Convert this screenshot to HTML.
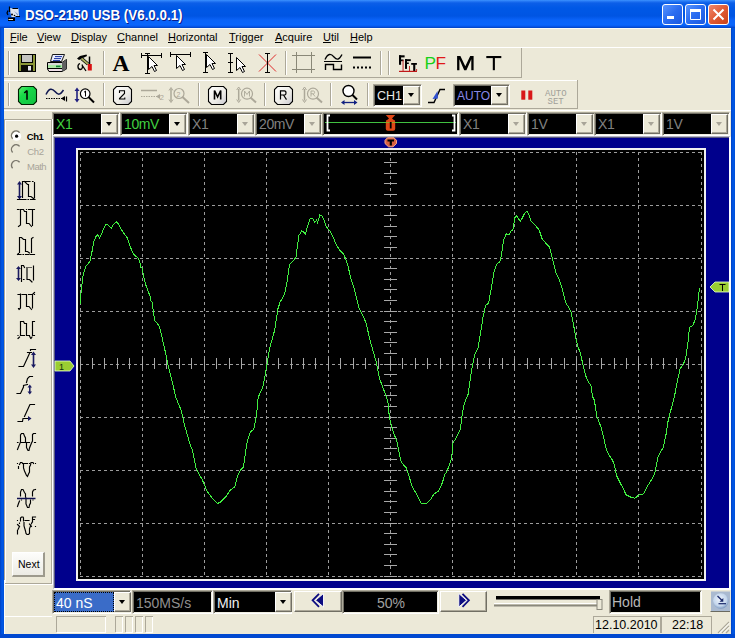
<!DOCTYPE html>
<html><head><meta charset="utf-8">
<style>
*{margin:0;padding:0;box-sizing:border-box}
html,body{width:735px;height:638px;overflow:hidden;background:#ECE9D8;font-family:"Liberation Sans",sans-serif;font-size:11px;color:#000}
.a{position:absolute}
.t{white-space:nowrap}
#title{left:0;top:0;width:735px;height:28px;background:linear-gradient(#3d95ff 0px,#2a7cf6 1px,#0c5fe8 3px,#0058e6 8px,#0055e3 16px,#0a63f8 20px,#0a66fc 25px,#0650e0 27px,#0040b8 28px)}
#ttext{left:25px;top:7px;color:#fff;font-weight:bold;font-size:14px;transform:scaleX(0.955);transform-origin:0 0;text-shadow:1px 1px 0 #0a1e8c;white-space:nowrap}
.frame{background:linear-gradient(90deg,#0040c0,#0058e8,#0050d8)}
.menu{top:31px;white-space:nowrap}
.u{text-decoration:underline}
</style></head><body>
<div class="a" id="title"></div>
<div class="a" style="left:4px;top:28px;width:727px;height:1px;background:#fbfbf6"></div>
<div class="a" id="ttext">DSO-2150 USB (V6.0.0.1)</div>
<div class="a frame" style="left:0;top:28px;width:4px;height:610px"></div>
<div class="a frame" style="left:731px;top:28px;width:4px;height:610px"></div>
<div class="a" style="left:0;top:634px;width:735px;height:4px;background:#0048d0"></div>

<div class="a menu" style="left:10px"><span class="u">F</span>ile</div>
<div class="a menu" style="left:37px"><span class="u">V</span>iew</div>
<div class="a menu" style="left:71px"><span class="u">D</span>isplay</div>
<div class="a menu" style="left:117px"><span class="u">C</span>hannel</div>
<div class="a menu" style="left:168px"><span class="u">H</span>orizontal</div>
<div class="a menu" style="left:229px"><span class="u">T</span>rigger</div>
<div class="a menu" style="left:275px"><span class="u">A</span>cquire</div>
<div class="a menu" style="left:323px"><span class="u">U</span>til</div>
<div class="a menu" style="left:350px"><span class="u">H</span>elp</div>

<div class="a" style="left:4px;top:47px;width:727px;height:1px;background:#fff"></div>
<div class="a" style="left:4px;top:77px;width:518px;height:1px;background:#aca899"></div>
<div class="a" style="left:521px;top:48px;width:1px;height:30px;background:#aca899"></div>
<div class="a" style="left:4px;top:80px;width:573px;height:1px;background:#fff"></div>
<div class="a" style="left:4px;top:108px;width:574px;height:1px;background:#aca899"></div>
<div class="a" style="left:577px;top:80px;width:1px;height:29px;background:#aca899"></div>
<div class="a" style="left:4px;top:110px;width:727px;height:1px;background:#fff"></div>
<div class="a" style="left:8px;top:51px;width:1px;height:24px;background:#aca899"></div><div class="a" style="left:9px;top:51px;width:1px;height:24px;background:#fff"></div>
<div class="a" style="left:103px;top:51px;width:1px;height:24px;background:#aca899"></div><div class="a" style="left:104px;top:51px;width:1px;height:24px;background:#fff"></div>
<div class="a" style="left:285px;top:51px;width:1px;height:24px;background:#aca899"></div><div class="a" style="left:286px;top:51px;width:1px;height:24px;background:#fff"></div>
<div class="a" style="left:380px;top:51px;width:1px;height:24px;background:#aca899"></div><div class="a" style="left:381px;top:51px;width:1px;height:24px;background:#fff"></div>
<div class="a" style="left:388px;top:51px;width:1px;height:24px;background:#aca899"></div><div class="a" style="left:389px;top:51px;width:1px;height:24px;background:#fff"></div>
<div class="a" style="left:8px;top:83px;width:1px;height:23px;background:#aca899"></div><div class="a" style="left:9px;top:83px;width:1px;height:23px;background:#fff"></div>
<div class="a" style="left:103px;top:83px;width:1px;height:23px;background:#aca899"></div><div class="a" style="left:104px;top:83px;width:1px;height:23px;background:#fff"></div>
<div class="a" style="left:198px;top:83px;width:1px;height:23px;background:#aca899"></div><div class="a" style="left:199px;top:83px;width:1px;height:23px;background:#fff"></div>
<div class="a" style="left:264px;top:83px;width:1px;height:23px;background:#aca899"></div><div class="a" style="left:265px;top:83px;width:1px;height:23px;background:#fff"></div>
<div class="a" style="left:330px;top:83px;width:1px;height:23px;background:#aca899"></div><div class="a" style="left:331px;top:83px;width:1px;height:23px;background:#fff"></div>
<div class="a" style="left:367px;top:83px;width:1px;height:23px;background:#aca899"></div><div class="a" style="left:368px;top:83px;width:1px;height:23px;background:#fff"></div>

<svg class="a" style="left:0;top:0" width="735" height="112" viewBox="0 0 735 112">
<!-- floppy -->
<rect x="18.5" y="54.5" width="17" height="17" fill="#8c9838" stroke="#000"/>
<rect x="21.5" y="54.5" width="11" height="8" fill="#c4c4c0" stroke="#000"/>
<rect x="21" y="65" width="12" height="6.5" fill="#0c0c08"/>
<rect x="28" y="66" width="3" height="4.5" fill="#e8e8f0"/>
<!-- printer -->
<path d="M50.5,61.5 L52.5,54.5 L64.5,54.5 L61.5,61.5 Z" fill="#e8ecff" stroke="#000" stroke-width="0.9"/>
<path d="M55,56.6 L62,56.6 M54,58.6 L61,58.6 M53,60.6 L60,60.6" stroke="#1830a0" stroke-width="1"/>
<path d="M47.5,62.5 L62,62.5 L66.5,59.5 L66.5,69 L62,71.5 L49,71.5 L47.5,69 Z" fill="#d8d8d8" stroke="#000" stroke-width="1"/>
<path d="M62,62.5 L66.5,59.5 L66.5,69 L62,71.5 Z" fill="#606060"/>
<rect x="48" y="65" width="14" height="2.8" fill="#a8e8a0"/>
<rect x="56" y="65.6" width="4.5" height="1.6" fill="#108030"/>
<path d="M47.5,68.5 L62,68.5" stroke="#000" stroke-width="1"/>
<rect x="49" y="69.2" width="12" height="1.8" fill="#f0e0e8"/>
<!-- tool -->
<path d="M77,58.5 L80,56 L86.5,54.5 L87,56 L82,58.5 L79,60 Z" fill="#000"/>
<path d="M81.5,58.5 L88,64" stroke="#000" stroke-width="3.2"/>
<path d="M81.5,58.5 L88,64" stroke="#a8b060" stroke-width="1.8"/>
<path d="M89.5,56.5 L89.5,64" stroke="#000" stroke-width="1.5"/>
<rect x="87.8" y="64" width="4" height="6.5" fill="#d81010"/>
<path d="M80,63.5 C77,64.5 77.5,69.5 80.5,69.5 C82.5,69.5 83,66 82,64.5 M82,65 L86,71" fill="none" stroke="#000" stroke-width="1.3"/>
<!-- A -->
<text x="112.5" y="71" font-family="Liberation Serif" font-weight="bold" font-size="23.5" fill="#000">A</text>
<!-- cursor icons -->
<g stroke="#000" stroke-width="1" fill="none" shape-rendering="crispEdges">
<path d="M141,55.5 L162,55.5 M141.5,53 L141.5,58 M161.5,53 L161.5,58"/>
<path d="M147.5,53 L147.5,74 M145,73.5 L150,73.5 M145,53.5 L150,53.5"/>
<path d="M170,54.5 L191,54.5 M170.5,52 L170.5,57 M190.5,52 L190.5,57"/>
<path d="M205.5,52 L205.5,73 M203,52.5 L208,52.5 M203,72.5 L208,72.5"/>
<path d="M230.5,53 L230.5,73 M228,53.5 L233,53.5 M228,72.5 L233,72.5 M228,62.5 L233,62.5"/>
</g>
<g fill="#fff" stroke="#000" stroke-width="1">
<path d="M148.5,56.5 L157.5,65.5 L154,65.5 L156.5,70.5 L154.5,71.5 L152,66.5 L148.5,69.5 Z"/>
<path d="M176.5,55.5 L185.5,64.5 L182,64.5 L184.5,69.5 L182.5,70.5 L180,65.5 L176.5,68.5 Z"/>
<path d="M206.5,54.5 L215.5,63.5 L212,63.5 L214.5,68.5 L212.5,69.5 L210,64.5 L206.5,67.5 Z"/>
<path d="M236.5,57.5 L245.5,66.5 L242,66.5 L244.5,71.5 L242.5,72.5 L240,67.5 L236.5,70.5 Z"/>
</g>
<!-- red X -->
<path d="M259,54.5 L276,71.5 M276,54.5 L259,71.5" stroke="#e02828" stroke-width="1"/>
<path d="M267.5,53 L267.5,73 M265,53.5 L270,53.5 M265,72.5 L270,72.5" stroke="#000" stroke-width="1" shape-rendering="crispEdges"/>
<!-- grid icon -->
<path d="M292,55.5 L315,55.5 M292,69.5 L315,69.5 M296.5,52 L296.5,73 M311.5,52 L311.5,73" stroke="#8a8878" stroke-width="1" shape-rendering="crispEdges"/>
<!-- wave icon -->
<path d="M325,59.5 C328,53 331,53.5 334,57 C337,60.5 339,60 342,54.5" fill="none" stroke="#000" stroke-width="1.3"/>
<path d="M324,61.5 L342,61.5" stroke="#000" stroke-width="1" shape-rendering="crispEdges"/>
<path d="M325.5,70 L325.5,64.5 L333.5,64.5 L333.5,69.5 L341.5,69.5 L341.5,64.5" fill="none" stroke="#000" stroke-width="1.4"/>
<!-- lines icon -->
<path d="M353,57.5 L371,57.5" stroke="#000" stroke-width="2"/>
<path d="M353,67.5 L371,67.5" stroke="#000" stroke-width="2" stroke-dasharray="2 2"/>
<!-- FFT -->
<g fill="#000">
<rect x="399" y="55.3" width="2.1" height="9.5"/><rect x="399" y="55.3" width="5.6" height="2.1"/><rect x="399" y="59.5" width="4.5" height="1.7"/>
<rect x="405" y="59.2" width="2" height="9.7"/><rect x="405" y="59.2" width="5.8" height="1.9"/><rect x="405" y="62.5" width="3.8" height="1.5"/>
<rect x="411.2" y="63" width="5.7" height="1.8"/><rect x="413.2" y="63" width="2.1" height="8"/>
</g>
<g fill="#c01818">
<rect x="399" y="70.8" width="18" height="1.2"/><rect x="402.6" y="60" width="0.9" height="11"/><rect x="409" y="66" width="0.9" height="5"/><rect x="416.2" y="69" width="0.9" height="2"/>
</g>
<text x="424.5" y="69" font-family="Liberation Sans" font-size="17.3" fill="#18d018">P</text>
<text x="435.5" y="69" font-family="Liberation Sans" font-size="17.3" fill="#e01818">F</text>
<path d="M457.1,70.2 L457.1,56 L460.4,56 L465.3,66.3 L470.2,56 L473.6,56 L473.6,70.2 L471.3,70.2 L471.3,59.3 L466.4,70.2 L464.2,70.2 L459.4,59.3 L459.4,70.2 Z" fill="#000"/>
<rect x="486.3" y="56" width="15" height="2.1" fill="#000"/>
<rect x="492.8" y="56" width="2.1" height="14.2" fill="#000"/>
</svg>


<svg class="a" style="left:0;top:0" width="735" height="112" viewBox="0 0 735 112">
<defs>
<linearGradient id="gg" x1="0" y1="0" x2="1" y2="1"><stop offset="0" stop-color="#60f070"/><stop offset="0.35" stop-color="#18d848"/><stop offset="1" stop-color="#10c040"/></linearGradient>
<linearGradient id="wg" x1="0" y1="0" x2="1" y2="1"><stop offset="0" stop-color="#ffffff"/><stop offset="0.6" stop-color="#ecebe6"/><stop offset="1" stop-color="#c8c8d0"/></linearGradient>
</defs>
<path d="M21.5,86.5 L33.5,86.5 L36.5,89.5 L36.5,101.5 L33.5,104.5 L21.5,104.5 L18.5,101.5 L18.5,89.5 Z" fill="url(#gg)" stroke="#002000" stroke-width="1.1"/>
<path d="M27,90.5 L27,99.8 M24.3,93 L27,90.5" stroke="#000" stroke-width="1.6" fill="none"/>
<!-- wave1 -->
<path d="M46,94.5 C49,88 52,88 55,91.5 C58,95 60,95.5 63.5,90" fill="none" stroke="#101850" stroke-width="1.5"/>
<path d="M46,98.5 L62,98.5" stroke="#000" stroke-width="1" stroke-dasharray="1.5 1"/>
<path d="M61,98.5 L65,96 L65,101 Z" fill="#000"/>
<path d="M66.5,96.5 L66.5,101.5" stroke="#000" stroke-width="1.2"/>
<!-- zoom1 -->
<path d="M77,89 L77,101" stroke="#202080" stroke-width="1.6"/>
<path d="M74.5,91 L77,87.5 L79.5,91 Z M74.5,99 L77,102.5 L79.5,99 Z" fill="#202080"/>
<circle cx="85.2" cy="93.7" r="4.8" fill="#fff" stroke="#000" stroke-width="1.2"/>
<path d="M88.5,97 L94,102.5" stroke="#000" stroke-width="2"/>
<path d="M85.5,91 L85.5,96.5 M84,92.3 L85.5,91" stroke="#000" stroke-width="1" fill="none"/>
<!-- button 2 -->
<path d="M116.5,86.5 L128.5,86.5 L131.5,89.5 L131.5,101.5 L128.5,104.5 L116.5,104.5 L113.5,101.5 L113.5,89.5 Z" fill="url(#wg)" stroke="#000" stroke-width="1.1"/>
<path d="M119.5,93 L119.5,90.7 L124.5,90.7 L124.5,93.5 L119.5,98.5 L119.5,99 L124.8,99 L124.8,97.5" fill="none" stroke="#000" stroke-width="1.1"/>
<!-- wave2 disabled -->
<path d="M141,90.5 L157,90.5" stroke="#aca899" stroke-width="1.5"/>
<path d="M141,96.5 L157,96.5" stroke="#aca899" stroke-width="1" stroke-dasharray="1.5 1"/>
<path d="M156,96.5 L160,94 L160,99 Z" fill="#aca899"/>
<text x="159.5" y="99.5" font-family="Liberation Sans" font-size="8" fill="#aca899">2</text>
<!-- zoom2 disabled -->
<g stroke="#aca899" fill="none">
<path d="M171,89 L171,101" stroke-width="1.5"/><path d="M169,90.5 L171,87.5 L173,90.5 M169,99.5 L171,102.5 L173,99.5" stroke-width="1"/>
<circle cx="179" cy="93.5" r="5" stroke-width="1.2"/>
<path d="M182.5,97 L189,103" stroke-width="2"/>
</g>
<text x="176.5" y="96.5" font-family="Liberation Sans" font-size="7" fill="#aca899">2</text>
<!-- M -->
<path d="M211.5,86.5 L223.5,86.5 L226.5,89.5 L226.5,101.5 L223.5,104.5 L211.5,104.5 L208.5,101.5 L208.5,89.5 Z" fill="url(#wg)" stroke="#000" stroke-width="1.1"/>
<path d="M214.5,99.6 L214.5,90.5 L217.6,97 L220.7,90.5 L220.7,99.6" fill="none" stroke="#000" stroke-width="1.6"/>
<g stroke="#aca899" fill="none">
<path d="M238.7,89 L238.7,100.5" stroke-width="1.5"/><path d="M236.7,90 L238.7,87 L240.7,90 M236.7,99.5 L238.7,102.5 L240.7,99.5" stroke-width="1"/>
<circle cx="247" cy="93.7" r="5.5" stroke-width="1.2"/>
<path d="M250.5,97.5 L256,102.5" stroke-width="2"/>
<path d="M244.5,96.5 L244.5,91 L247,94.5 L249.5,91 L249.5,96.5" stroke-width="0.9"/>
</g>
<!-- R -->
<path d="M277.5,86.5 L289.5,86.5 L292.5,89.5 L292.5,101.5 L289.5,104.5 L277.5,104.5 L274.5,101.5 L274.5,89.5 Z" fill="url(#wg)" stroke="#000" stroke-width="1.1"/>
<path d="M280.5,99.6 L280.5,90.8 L284.5,90.8 C286.5,90.8 286.5,95 284.5,95 L280.5,95 M283.5,95 L286.5,99.6" fill="none" stroke="#000" stroke-width="1.2"/>
<g stroke="#aca899" fill="none">
<path d="M304.5,89 L304.5,100.5" stroke-width="1.5"/><path d="M302.5,90 L304.5,87 L306.5,90 M302.5,99.5 L304.5,102.5 L306.5,99.5" stroke-width="1"/>
<circle cx="313" cy="93.7" r="5.5" stroke-width="1.2"/>
<path d="M316.5,97.5 L322,102.5" stroke-width="2"/>
<path d="M311,96.5 L311,91 L313.5,91 C315,91 315,93.8 313.5,93.8 L311,93.8 M313,93.8 L315,96.5" stroke-width="0.9"/>
</g>
<!-- zoom arrow -->
<circle cx="348.5" cy="91" r="5.5" fill="#fff" stroke="#000" stroke-width="1.4"/>
<path d="M352.5,95 L357,99.5" stroke="#000" stroke-width="2"/>
<path d="M344,102.5 L355,102.5" stroke="#102080" stroke-width="1.3"/>
<path d="M341,102.5 L344.5,100 L344.5,105 Z M357.5,102.5 L354,100 L354,105 Z" fill="#102080"/>
<!-- trigger edge -->
<path d="M428,102.5 L434,102.5 L440,89.5 L445,89.5" fill="none" stroke="#000" stroke-width="1.4"/>
<path d="M432.5,99 L437.5,91 L438,98.5 Z" fill="#3050d0"/>
<!-- pause -->
<rect x="521.3" y="90.5" width="4" height="9.2" fill="#d81818"/>
<rect x="528.3" y="90.5" width="4" height="9.2" fill="#d81818"/>
<text x="545" y="95.5" font-family="Liberation Mono" font-size="9" fill="#a0a098">AUTO</text>
<text x="547.5" y="103.5" font-family="Liberation Mono" font-size="9" fill="#a0a098">SET</text>
</svg>

<div class="a" style="left:373px;top:84px;width:49px;height:23px;background:#ece9d8;border-top:1px solid #aca899;border-left:1px solid #aca899;border-bottom:1px solid #fff;border-right:1px solid #fff;box-shadow:inset 1px 1px 0 #716f64, inset -1px -1px 0 #f1efe2"></div><div class="a" style="left:375px;top:86px;width:28px;height:19px;background:#000"></div><div class="a" style="left:403px;top:86px;width:17px;height:19px;background:#ece9d8;border-top:1px solid #fff;border-left:1px solid #fff;border-right:1px solid #716f64;border-bottom:1px solid #716f64;box-shadow:inset -1px -1px 0 #aca899"></div><div class="a" style="left:408px;top:93px;width:0;height:0;border-left:3.5px solid transparent;border-right:3.5px solid transparent;border-top:4px solid #000"></div><div class="a t" style="left:377px;top:87px;height:19px;line-height:19px;font-size:12.5px;letter-spacing:0px;color:#e8e8e8">CH1</div><div class="a" style="left:453px;top:84px;width:57px;height:23px;background:#ece9d8;border-top:1px solid #aca899;border-left:1px solid #aca899;border-bottom:1px solid #fff;border-right:1px solid #fff;box-shadow:inset 1px 1px 0 #716f64, inset -1px -1px 0 #f1efe2"></div><div class="a" style="left:455px;top:86px;width:36px;height:19px;background:#000"></div><div class="a" style="left:491px;top:86px;width:17px;height:19px;background:#ece9d8;border-top:1px solid #fff;border-left:1px solid #fff;border-right:1px solid #716f64;border-bottom:1px solid #716f64;box-shadow:inset -1px -1px 0 #aca899"></div><div class="a" style="left:496px;top:93px;width:0;height:0;border-left:3.5px solid transparent;border-right:3.5px solid transparent;border-top:4px solid #000"></div><div class="a t" style="left:457px;top:87px;height:19px;line-height:19px;font-size:12px;letter-spacing:0px;color:#8888e8">AUTO</div>

<div class="a" style="left:53px;top:136px;width:678px;height:454px;background:#00008c;border-top:1px solid #b4b4c4;border-left:1px solid #b4b4c4;border-bottom:2px solid #fff;border-right:2px solid #fff;box-shadow:inset 1px 1px 0 #585880"></div>
<div class="a" style="left:76px;top:148px;width:630px;height:433px;background:#f0f0f0"></div>
<div class="a" style="left:78px;top:150px;width:626px;height:429px;background:#000"></div>
<svg class="a" style="left:0;top:0" width="735" height="638" viewBox="0 0 735 638">
<g stroke="#9c9c9c" stroke-width="1" stroke-dasharray="3 3" shape-rendering="crispEdges">
<line x1="80.5" y1="152" x2="80.5" y2="577"/><line x1="142.5" y1="152" x2="142.5" y2="577"/><line x1="204.5" y1="152" x2="204.5" y2="577"/><line x1="266.5" y1="152" x2="266.5" y2="577"/><line x1="328.5" y1="152" x2="328.5" y2="577"/><line x1="390.5" y1="152" x2="390.5" y2="577"/><line x1="452.5" y1="152" x2="452.5" y2="577"/><line x1="514.5" y1="152" x2="514.5" y2="577"/><line x1="576.5" y1="152" x2="576.5" y2="577"/><line x1="638.5" y1="152" x2="638.5" y2="577"/><line x1="701.5" y1="152" x2="701.5" y2="577"/><line x1="80" y1="152.5" x2="702" y2="152.5"/><line x1="80" y1="205.5" x2="702" y2="205.5"/><line x1="80" y1="258.5" x2="702" y2="258.5"/><line x1="80" y1="311.5" x2="702" y2="311.5"/><line x1="80" y1="364.5" x2="702" y2="364.5"/><line x1="80" y1="417.5" x2="702" y2="417.5"/><line x1="80" y1="470.5" x2="702" y2="470.5"/><line x1="80" y1="523.5" x2="702" y2="523.5"/><line x1="80" y1="576.5" x2="702" y2="576.5"/>
</g>
<g stroke="#a8a8a8" stroke-width="1" shape-rendering="crispEdges">
<line x1="384" y1="152.5" x2="397" y2="152.5"/><line x1="384" y1="162.5" x2="397" y2="162.5"/><line x1="384" y1="173.5" x2="397" y2="173.5"/><line x1="384" y1="183.5" x2="397" y2="183.5"/><line x1="384" y1="194.5" x2="397" y2="194.5"/><line x1="384" y1="205.5" x2="397" y2="205.5"/><line x1="384" y1="215.5" x2="397" y2="215.5"/><line x1="384" y1="226.5" x2="397" y2="226.5"/><line x1="384" y1="236.5" x2="397" y2="236.5"/><line x1="384" y1="247.5" x2="397" y2="247.5"/><line x1="384" y1="258.5" x2="397" y2="258.5"/><line x1="384" y1="268.5" x2="397" y2="268.5"/><line x1="384" y1="279.5" x2="397" y2="279.5"/><line x1="384" y1="289.5" x2="397" y2="289.5"/><line x1="384" y1="300.5" x2="397" y2="300.5"/><line x1="384" y1="311.5" x2="397" y2="311.5"/><line x1="384" y1="321.5" x2="397" y2="321.5"/><line x1="384" y1="332.5" x2="397" y2="332.5"/><line x1="384" y1="342.5" x2="397" y2="342.5"/><line x1="384" y1="353.5" x2="397" y2="353.5"/><line x1="384" y1="364.5" x2="397" y2="364.5"/><line x1="384" y1="374.5" x2="397" y2="374.5"/><line x1="384" y1="385.5" x2="397" y2="385.5"/><line x1="384" y1="395.5" x2="397" y2="395.5"/><line x1="384" y1="406.5" x2="397" y2="406.5"/><line x1="384" y1="417.5" x2="397" y2="417.5"/><line x1="384" y1="427.5" x2="397" y2="427.5"/><line x1="384" y1="438.5" x2="397" y2="438.5"/><line x1="384" y1="448.5" x2="397" y2="448.5"/><line x1="384" y1="459.5" x2="397" y2="459.5"/><line x1="384" y1="470.5" x2="397" y2="470.5"/><line x1="384" y1="480.5" x2="397" y2="480.5"/><line x1="384" y1="491.5" x2="397" y2="491.5"/><line x1="384" y1="501.5" x2="397" y2="501.5"/><line x1="384" y1="512.5" x2="397" y2="512.5"/><line x1="384" y1="523.5" x2="397" y2="523.5"/><line x1="384" y1="533.5" x2="397" y2="533.5"/><line x1="384" y1="544.5" x2="397" y2="544.5"/><line x1="384" y1="554.5" x2="397" y2="554.5"/><line x1="384" y1="565.5" x2="397" y2="565.5"/><line x1="384" y1="576.5" x2="397" y2="576.5"/><line x1="80.5" y1="358" x2="80.5" y2="369"/><line x1="92.5" y1="358" x2="92.5" y2="369"/><line x1="104.5" y1="358" x2="104.5" y2="369"/><line x1="117.5" y1="358" x2="117.5" y2="369"/><line x1="129.5" y1="358" x2="129.5" y2="369"/><line x1="142.5" y1="358" x2="142.5" y2="369"/><line x1="154.5" y1="358" x2="154.5" y2="369"/><line x1="166.5" y1="358" x2="166.5" y2="369"/><line x1="179.5" y1="358" x2="179.5" y2="369"/><line x1="191.5" y1="358" x2="191.5" y2="369"/><line x1="204.5" y1="358" x2="204.5" y2="369"/><line x1="216.5" y1="358" x2="216.5" y2="369"/><line x1="229.5" y1="358" x2="229.5" y2="369"/><line x1="241.5" y1="358" x2="241.5" y2="369"/><line x1="253.5" y1="358" x2="253.5" y2="369"/><line x1="266.5" y1="358" x2="266.5" y2="369"/><line x1="278.5" y1="358" x2="278.5" y2="369"/><line x1="291.5" y1="358" x2="291.5" y2="369"/><line x1="303.5" y1="358" x2="303.5" y2="369"/><line x1="315.5" y1="358" x2="315.5" y2="369"/><line x1="328.5" y1="358" x2="328.5" y2="369"/><line x1="340.5" y1="358" x2="340.5" y2="369"/><line x1="353.5" y1="358" x2="353.5" y2="369"/><line x1="365.5" y1="358" x2="365.5" y2="369"/><line x1="378.5" y1="358" x2="378.5" y2="369"/><line x1="390.5" y1="358" x2="390.5" y2="369"/><line x1="402.5" y1="358" x2="402.5" y2="369"/><line x1="415.5" y1="358" x2="415.5" y2="369"/><line x1="427.5" y1="358" x2="427.5" y2="369"/><line x1="440.5" y1="358" x2="440.5" y2="369"/><line x1="452.5" y1="358" x2="452.5" y2="369"/><line x1="465.5" y1="358" x2="465.5" y2="369"/><line x1="477.5" y1="358" x2="477.5" y2="369"/><line x1="489.5" y1="358" x2="489.5" y2="369"/><line x1="502.5" y1="358" x2="502.5" y2="369"/><line x1="514.5" y1="358" x2="514.5" y2="369"/><line x1="527.5" y1="358" x2="527.5" y2="369"/><line x1="539.5" y1="358" x2="539.5" y2="369"/><line x1="551.5" y1="358" x2="551.5" y2="369"/><line x1="564.5" y1="358" x2="564.5" y2="369"/><line x1="576.5" y1="358" x2="576.5" y2="369"/><line x1="589.5" y1="358" x2="589.5" y2="369"/><line x1="601.5" y1="358" x2="601.5" y2="369"/><line x1="614.5" y1="358" x2="614.5" y2="369"/><line x1="626.5" y1="358" x2="626.5" y2="369"/><line x1="638.5" y1="358" x2="638.5" y2="369"/><line x1="651.5" y1="358" x2="651.5" y2="369"/><line x1="663.5" y1="358" x2="663.5" y2="369"/><line x1="676.5" y1="358" x2="676.5" y2="369"/><line x1="688.5" y1="358" x2="688.5" y2="369"/><line x1="701.5" y1="358" x2="701.5" y2="369"/>
</g>
<polyline fill="none" stroke="#40f040" stroke-width="1" shape-rendering="crispEdges" points="80.4,304.0 81.0,293.0 82.0,283.7 83.0,275.8 84.6,270.3 86.2,265.6 88.5,263.3 89.8,261.7 90.9,257.0 92.5,249.2 93.6,242.1 95.6,237.4 97.2,234.3 98.7,236.6 99.5,238.2 101.1,235.1 103.4,228.8 105.8,224.9 107.3,224.1 109.7,226.5 111.3,228.0 113.6,224.1 116.8,221.8 119.1,224.9 121.5,229.6 124.6,234.3 127.0,237.4 129.7,244.7 131.3,249.4 133.6,254.1 136.0,256.5 138.3,258.0 139.9,262.0 140.7,267.4 142.2,268.2 143.8,277.6 145.4,283.1 146.2,286.2 147.7,290.2 150.1,296.4 150.9,301.1 152.4,302.7 153.2,310.5 154.8,320.7 156.3,322.3 158.7,325.4 160.3,329.3 162.6,340.0 164.8,349.4 168.1,365.8 172.4,382.3 175.7,397.1 181.2,410.3 184.5,425.0 190.0,444.0 192.6,450.9 196.0,468.1 198.6,473.3 202.1,479.3 206.4,489.7 209.0,494.0 212.4,498.3 217.6,503.4 221.0,501.7 225.3,497.4 230.5,489.7 234.8,487.1 237.4,475.9 240.9,469.8 243.4,467.2 246.9,443.1 250.3,431.9 253.8,429.3 256.4,416.4 258.2,397.4 263.2,385.9 266.4,367.8 269.7,348.0 274.7,330.0 278.0,308.6 280.0,302.4 284.7,294.0 287.5,279.0 289.4,264.8 292.2,262.0 296.0,257.3 298.8,235.7 301.6,231.0 303.5,232.0 305.4,233.8 308.2,224.4 310.1,218.8 312.9,218.8 314.8,222.6 316.7,219.7 317.6,222.6 319.8,215.0 322.3,216.0 324.2,220.7 326.0,226.3 329.8,231.0 332.6,235.7 336.4,245.1 340.2,250.8 343.9,254.5 347.7,264.8 350.5,277.1 353.3,285.5 356.1,295.9 358.9,308.1 361.8,313.7 364.6,319.4 366.5,324.7 369.8,339.5 373.1,351.0 376.4,362.5 379.7,379.0 384.6,392.1 387.9,402.0 389.5,418.4 392.6,430.2 396.9,441.4 398.6,450.0 401.2,462.1 406.4,468.1 409.0,475.9 411.6,485.3 415.9,493.1 418.4,497.4 421.0,503.1 427.1,503.1 431.4,498.3 434.0,494.0 438.3,491.4 441.7,484.5 443.2,480.0 444.4,475.2 446.9,471.4 448.8,466.4 450.7,461.4 451.9,455.1 452.6,447.6 453.2,441.4 455.1,440.1 456.9,436.3 458.8,432.0 460.1,430.1 461.3,422.6 462.0,415.7 463.2,408.8 464.5,403.1 465.7,400.0 468.2,394.0 471.4,371.0 474.7,354.6 478.0,348.0 481.3,328.3 482.8,318.4 485.6,305.3 488.5,303.4 491.3,288.3 494.1,271.4 496.9,263.9 499.7,262.0 501.6,254.5 503.5,240.4 506.3,233.8 509.1,234.8 511.0,231.0 512.9,230.1 514.8,217.9 516.7,216.0 520.4,221.6 524.2,214.1 527.0,211.3 528.9,215.0 530.8,220.7 534.5,224.4 539.2,230.1 542.0,238.5 545.8,243.2 549.5,247.0 552.4,258.3 556.1,273.3 558.9,279.0 562.7,290.2 565.5,302.4 568.4,306.9 571.0,312.1 572.8,320.7 574.5,330.2 576.2,339.7 577.9,346.6 580.5,353.4 583.1,365.5 585.7,375.9 588.3,381.9 590.9,385.3 592.6,396.6 594.3,400.0 596.9,416.4 598.6,420.7 601.2,427.6 603.8,437.9 606.4,450.0 609.0,455.2 611.6,458.6 614.1,463.8 616.7,475.9 620.2,482.8 622.8,487.9 626.2,494.8 631.4,497.4 634.8,498.3 639.1,494.8 643.4,494.0 646.9,487.1 651.2,480.2 654.7,474.1 655.5,469.0 658.1,456.9 660.7,451.7 663.3,447.4 665.9,435.3 668.4,419.0 670.6,411.1 674.1,398.1 677.6,380.5 680.0,368.8 683.5,364.0 685.9,357.0 688.2,340.5 689.4,327.6 692.9,325.3 695.3,319.4 697.6,305.3 698.8,293.5 700.0,287.6"/>
</svg>

<svg class="a" style="left:0;top:0" width="735" height="638" viewBox="0 0 735 638">
<path d="M55,361 L70,361 L74,366 L70,371 L55,371 Z" fill="#9acd32" stroke="#e8ffd0" stroke-width="0.8"/>
<text x="59" y="370" font-family="Liberation Sans" font-size="9" fill="#103010">1</text>
<path d="M729,282 L715,282 L710,287 L715,292 L729,292 Z" fill="#9acd32" stroke="#e8ffd0" stroke-width="0.8"/>
<path d="M719.5,284.5 L725.5,284.5 M722.5,284.5 L722.5,291" stroke="#000" stroke-width="1"/>
</svg>

<div class="a" style="left:52px;top:112px;width:68px;height:24px;background:#ece9d8;border-top:1px solid #aca899;border-left:1px solid #aca899;border-bottom:1px solid #fff;border-right:1px solid #fff;box-shadow:inset 1px 1px 0 #716f64, inset -1px -1px 0 #f1efe2"></div><div class="a" style="left:54px;top:114px;width:47px;height:20px;background:#000"></div><div class="a" style="left:101px;top:114px;width:17px;height:20px;background:#ece9d8;border-top:1px solid #fff;border-left:1px solid #fff;border-right:1px solid #716f64;border-bottom:1px solid #716f64;box-shadow:inset -1px -1px 0 #aca899"></div><div class="a" style="left:106px;top:122px;width:0;height:0;border-left:3.5px solid transparent;border-right:3.5px solid transparent;border-top:4px solid #000"></div><div class="a t" style="left:56px;top:114px;height:20px;line-height:20px;font-size:14px;letter-spacing:-0.4px;color:#40d040">X1</div><div class="a" style="left:120px;top:112px;width:68px;height:24px;background:#ece9d8;border-top:1px solid #aca899;border-left:1px solid #aca899;border-bottom:1px solid #fff;border-right:1px solid #fff;box-shadow:inset 1px 1px 0 #716f64, inset -1px -1px 0 #f1efe2"></div><div class="a" style="left:122px;top:114px;width:47px;height:20px;background:#000"></div><div class="a" style="left:169px;top:114px;width:17px;height:20px;background:#ece9d8;border-top:1px solid #fff;border-left:1px solid #fff;border-right:1px solid #716f64;border-bottom:1px solid #716f64;box-shadow:inset -1px -1px 0 #aca899"></div><div class="a" style="left:174px;top:122px;width:0;height:0;border-left:3.5px solid transparent;border-right:3.5px solid transparent;border-top:4px solid #000"></div><div class="a t" style="left:124px;top:114px;height:20px;line-height:20px;font-size:14px;letter-spacing:-0.4px;color:#40d040">10mV</div><div class="a" style="left:188px;top:112px;width:68px;height:24px;background:#ece9d8;border-top:1px solid #aca899;border-left:1px solid #aca899;border-bottom:1px solid #fff;border-right:1px solid #fff;box-shadow:inset 1px 1px 0 #716f64, inset -1px -1px 0 #f1efe2"></div><div class="a" style="left:190px;top:114px;width:47px;height:20px;background:#000"></div><div class="a" style="left:237px;top:114px;width:17px;height:20px;background:#ece9d8;border-top:1px solid #fff;border-left:1px solid #fff;border-right:1px solid #716f64;border-bottom:1px solid #716f64;box-shadow:inset -1px -1px 0 #aca899"></div><div class="a" style="left:242px;top:122px;width:0;height:0;border-left:3.5px solid transparent;border-right:3.5px solid transparent;border-top:4px solid #a8a498"></div><div class="a t" style="left:192px;top:114px;height:20px;line-height:20px;font-size:14px;letter-spacing:-0.4px;color:#808080">X1</div><div class="a" style="left:255px;top:112px;width:68px;height:24px;background:#ece9d8;border-top:1px solid #aca899;border-left:1px solid #aca899;border-bottom:1px solid #fff;border-right:1px solid #fff;box-shadow:inset 1px 1px 0 #716f64, inset -1px -1px 0 #f1efe2"></div><div class="a" style="left:257px;top:114px;width:47px;height:20px;background:#000"></div><div class="a" style="left:304px;top:114px;width:17px;height:20px;background:#ece9d8;border-top:1px solid #fff;border-left:1px solid #fff;border-right:1px solid #716f64;border-bottom:1px solid #716f64;box-shadow:inset -1px -1px 0 #aca899"></div><div class="a" style="left:309px;top:122px;width:0;height:0;border-left:3.5px solid transparent;border-right:3.5px solid transparent;border-top:4px solid #a8a498"></div><div class="a t" style="left:259px;top:114px;height:20px;line-height:20px;font-size:14px;letter-spacing:-0.4px;color:#808080">20mV</div><div class="a" style="left:459px;top:112px;width:68px;height:24px;background:#ece9d8;border-top:1px solid #aca899;border-left:1px solid #aca899;border-bottom:1px solid #fff;border-right:1px solid #fff;box-shadow:inset 1px 1px 0 #716f64, inset -1px -1px 0 #f1efe2"></div><div class="a" style="left:461px;top:114px;width:47px;height:20px;background:#000"></div><div class="a" style="left:508px;top:114px;width:17px;height:20px;background:#ece9d8;border-top:1px solid #fff;border-left:1px solid #fff;border-right:1px solid #716f64;border-bottom:1px solid #716f64;box-shadow:inset -1px -1px 0 #aca899"></div><div class="a" style="left:513px;top:122px;width:0;height:0;border-left:3.5px solid transparent;border-right:3.5px solid transparent;border-top:4px solid #a8a498"></div><div class="a t" style="left:463px;top:114px;height:20px;line-height:20px;font-size:14px;letter-spacing:-0.4px;color:#808080">X1</div><div class="a" style="left:527px;top:112px;width:68px;height:24px;background:#ece9d8;border-top:1px solid #aca899;border-left:1px solid #aca899;border-bottom:1px solid #fff;border-right:1px solid #fff;box-shadow:inset 1px 1px 0 #716f64, inset -1px -1px 0 #f1efe2"></div><div class="a" style="left:529px;top:114px;width:47px;height:20px;background:#000"></div><div class="a" style="left:576px;top:114px;width:17px;height:20px;background:#ece9d8;border-top:1px solid #fff;border-left:1px solid #fff;border-right:1px solid #716f64;border-bottom:1px solid #716f64;box-shadow:inset -1px -1px 0 #aca899"></div><div class="a" style="left:581px;top:122px;width:0;height:0;border-left:3.5px solid transparent;border-right:3.5px solid transparent;border-top:4px solid #a8a498"></div><div class="a t" style="left:531px;top:114px;height:20px;line-height:20px;font-size:14px;letter-spacing:-0.4px;color:#808080">1V</div><div class="a" style="left:594px;top:112px;width:68px;height:24px;background:#ece9d8;border-top:1px solid #aca899;border-left:1px solid #aca899;border-bottom:1px solid #fff;border-right:1px solid #fff;box-shadow:inset 1px 1px 0 #716f64, inset -1px -1px 0 #f1efe2"></div><div class="a" style="left:596px;top:114px;width:47px;height:20px;background:#000"></div><div class="a" style="left:643px;top:114px;width:17px;height:20px;background:#ece9d8;border-top:1px solid #fff;border-left:1px solid #fff;border-right:1px solid #716f64;border-bottom:1px solid #716f64;box-shadow:inset -1px -1px 0 #aca899"></div><div class="a" style="left:648px;top:122px;width:0;height:0;border-left:3.5px solid transparent;border-right:3.5px solid transparent;border-top:4px solid #a8a498"></div><div class="a t" style="left:598px;top:114px;height:20px;line-height:20px;font-size:14px;letter-spacing:-0.4px;color:#808080">X1</div><div class="a" style="left:662px;top:112px;width:68px;height:24px;background:#ece9d8;border-top:1px solid #aca899;border-left:1px solid #aca899;border-bottom:1px solid #fff;border-right:1px solid #fff;box-shadow:inset 1px 1px 0 #716f64, inset -1px -1px 0 #f1efe2"></div><div class="a" style="left:664px;top:114px;width:47px;height:20px;background:#000"></div><div class="a" style="left:711px;top:114px;width:17px;height:20px;background:#ece9d8;border-top:1px solid #fff;border-left:1px solid #fff;border-right:1px solid #716f64;border-bottom:1px solid #716f64;box-shadow:inset -1px -1px 0 #aca899"></div><div class="a" style="left:716px;top:122px;width:0;height:0;border-left:3.5px solid transparent;border-right:3.5px solid transparent;border-top:4px solid #a8a498"></div><div class="a t" style="left:666px;top:114px;height:20px;line-height:20px;font-size:14px;letter-spacing:-0.4px;color:#808080">1V</div><div class="a" style="left:322px;top:112px;width:137px;height:24px;background:#000;border-top:1px solid #aca899;border-left:1px solid #aca899;border-bottom:1px solid #fff;border-right:1px solid #fff;box-shadow:inset 1px 1px 0 #716f64, inset -1px -1px 0 #f1efe2"></div>
<svg class="a" style="left:0;top:0" width="735" height="150" viewBox="0 0 735 150">
<path d="M325,122.5 L456,122.5" stroke="#40c040" stroke-width="1.2"/>
<path d="M330,115.5 L327.5,115.5 L327.5,130.5 L330,130.5" fill="none" stroke="#fff" stroke-width="1.8"/>
<path d="M452,115.5 L454.5,115.5 L454.5,130.5 L452,130.5" fill="none" stroke="#fff" stroke-width="1.8"/>
<path d="M385.8,115 L395.2,115 L392,118.5 L395.2,121 L385.8,121 L389,118.5 Z" fill="#e04818"/>
<rect x="385.8" y="120" width="9.4" height="10.8" rx="2" fill="#e04818"/>
<path d="M386,122.5 L395,122.5" stroke="#a0a020" stroke-width="1"/>
<rect x="389.8" y="122" width="1.8" height="6.5" fill="#000"/>
<path d="M387.5,137.8 L394,137.8 L396.5,140.3 L396.5,143.5 L393,146.8 L388.5,146.8 L385,143.5 L385,140.3 Z" fill="#d86040" stroke="#f8a888" stroke-width="1"/>
<path d="M387.5,140.5 L394,140.5 M390.8,140.5 L390.8,145.5" stroke="#000" stroke-width="2.2"/>
</svg>

<svg class="a" style="left:0;top:0" width="60" height="600" viewBox="0 0 60 600">
<!-- panel etched box -->
<path d="M4.5,583.5 L4.5,119.5 L51.5,119.5 L51.5,583.5 Z" fill="none" stroke="#aca899" shape-rendering="crispEdges"/>
<path d="M5.5,582.5 L5.5,120.5 L50.5,120.5 M52.5,119 L52.5,584.5 L4,584.5" fill="none" stroke="#fff" shape-rendering="crispEdges"/>
<!-- radios -->
<circle cx="16.6" cy="136.2" r="4.6" fill="#fff"/>
<path d="M12.6,138.7 A4.6,4.6 0 0 1 19.6,132.6" fill="none" stroke="#7a776c" stroke-width="1.4"/>
<circle cx="16.6" cy="136.2" r="1.6" fill="#000"/>
<path d="M12.6,152.5 A4.6,4.6 0 0 1 19.6,146.4" fill="none" stroke="#7a776c" stroke-width="1.4"/>
<path d="M12.6,168.3 A4.6,4.6 0 0 1 19.6,162.2" fill="none" stroke="#7a776c" stroke-width="1.4"/>
<text x="26.8" y="140" font-family="Liberation Sans" font-weight="bold" font-size="9.5" letter-spacing="-0.5" fill="#000">Ch1</text>
<text x="27.2" y="155" font-family="Liberation Sans" font-size="9.5" letter-spacing="-0.3" fill="#a8a498">Ch2</text>
<text x="27" y="170.3" font-family="Liberation Sans" font-size="9.5" letter-spacing="-0.5" fill="#a8a498">Math</text>
<g fill="none" stroke="#000" stroke-width="1.15" stroke-linecap="square">
<!-- 1 -->
<path d="M22.5,197.5 L22.5,181.5 L30,181.5 M24.5,181.5 L27.5,184.5 L28.5,184.5 L28.5,196.5 L31,196.5 L33.5,198.5 M34.5,182.5 L34.5,198 M32.5,181.5 L33,181.5"/>
<path d="M17.5,199.5 L26,199.5 M28,199.5 L28.5,199.5 M30.5,199.5 L35,199.5"/>
<!-- 2 -->
<path d="M17.5,209.5 L19,209.5 M18.5,226.5 L20.5,225 L20.5,209.5 L23.5,209.5 L24.5,211.5 L26.5,211.5 L26.5,223.5 L29,223.5 L31.5,226.5 M26.5,209.5 L26.5,209.5 M28.5,209.5 L34.5,209.5 M32.5,209.5 L32.5,225.5"/>
<!-- 3 -->
<path d="M19.5,252.5 L19.5,237.5 L21.5,237.5 L23.5,239.5 L25.5,239.5 L25.5,251.5 L27.5,251.5 L29.5,253 M31.5,252.5 L31.5,238.5 L33,237.5"/>
<path d="M17.5,254.5 L18.5,253.5 M18.5,254.5 L21,254.5 M23,254.5 L23.5,254.5 M25.5,254.5 L29,254.5 M30.5,254.5 L34.5,254.5"/>
<!-- 4 -->
<path d="M21.5,266.5 L21.5,281.5" stroke-dasharray="3 1"/>
<path d="M21.5,265.5 L23.5,265.5 L24.5,267.5 M27,267.5 L27,279.5 L29.5,279.5 L32,282 M33.5,266 L33.5,280 M29,267.5 L29,267.5 M31,267.5 L31,267.5 M23.5,279.5 L24,279.5"/>
<!-- 5 -->
<path d="M18,294.5 L20.5,294.5 M20.5,294 L20.5,308 L19,309.5 M22,294.5 L26.5,294.5 L26.5,306.5 L29,306.5 L31.5,309.5 M28.5,294.5 L32.5,294.5 L34.5,292.5 M32.5,294.5 L32.5,308 M18.5,308.5 L18.5,308.5 M34.5,294.5 L34.5,294.5"/>
<!-- 6 -->
<path d="M23.5,321.5 L20.5,321.5 L20.5,335.5 L24.5,335.5 M23.5,321.5 L24.5,323.5 L26.5,323.5 L26.5,335.5 L29.5,335.5 M34.5,321.5 L32.5,321.5 L32.5,335.5 L34.5,335.5 M19.5,337 L18,338.5 M29.5,336 L30.5,338 M32,337 L31,338.5 M18,335.5 L18,335.5"/>
<!-- 7 -->
<path d="M19,366.5 L23.5,366.5 L29.5,353.5 M27.5,352.5 L31.5,352.5 M30.5,350.5 L30.5,349.5 L35.5,349.5"/>
<!-- 8 -->
<path d="M17,393.5 L20.5,393.5 L23.5,387 L23.5,385.5 L27.5,384.5 M26.5,382.5 L27.5,378.5 L29.5,376.5 L32.5,376.5"/>
<!-- 9 -->
<path d="M18,421.5 L22.5,421.5 L23,418.5 L29,418.5 M24.5,416.5 L29.5,405.5 L30,404.5 L34.5,404.5"/>
<!-- 10 -->
<path d="M17.5,449.5 L20.5,442 L20.5,435 L21.5,433.5 L23.5,433.5 L24.5,436 L25.5,438 L25.5,442 L26.5,443 L26.5,447.5 L28,450.5 L29,450.5 L29.5,448 L31.5,443 L32.5,441 L32.5,434.5 L33.5,433.5 L35.5,433.5"/>
<path d="M17.5,442.5 L18,442.5 M21,442.5 L25,442.5 M26,442.5 L29.5,442.5 M34.5,442.5 L35.5,442.5"/>
<!-- 11 -->
<path d="M17.5,463.5 L17.5,463.5 M18.5,468.5 L18.5,466.5 M19.5,464.5 L20.5,462.5 L22,462.5 L22.5,463.5 M23.5,463.5 L27.5,463.5 M29.5,463.5 L29.5,463.5 M23.5,463.5 L23.5,468 L24.5,471 L26.5,475.5 L27.5,476.5 L28.5,474 L29.5,472 L29.5,467 L30.5,465 L31,462.5 L33,462.5 L33.5,463.5 M35.5,463.5 L35.5,463.5"/>
<!-- 12 -->
<path d="M17.5,506.5 L18.5,503.5 L19.5,501 M20.5,496 L20.5,492 L21.5,489.5 L23,489.5 L24.5,492.5 L25.5,494 L25.5,497 M26,498 L26,504 L27.5,507.5 L29,507.5 L29.5,505 L30.5,503 L30.5,500 M32.5,496 L32.5,492 L33.5,490 L35.5,489.5 M21.5,500 L21.5,500 M33,500 L33,500"/>
<!-- 13 -->
<path d="M20.5,521 L20.5,518 L21.5,517 L23,517 L23.5,518 L23.5,521 M25,520.5 L29,520.5 M32.5,522 L32.5,517 L35.5,517 M32.5,519.5 L34.5,519.5 M17.5,520.5 L17.5,520.5"/>
<path d="M17.5,524.5 L19.5,526.5 M19,527.5 L18,529.5 M17.5,530.5 L17.5,534 M19.5,523 L19.5,523.5 M24,522.5 L24,526 L25.5,531 L26,533.5 L27,534.5 L28.5,534.5 L29.5,533.5 L29.5,528.5 L31,525 M29.5,524 L31.5,526.5 M35.5,526.5 L35.5,526.5 M32,522.5 L31.5,523.5"/>
</g>
<path d="M17,498.5 L35.5,498.5" stroke="#101050" stroke-width="1.5"/>
<!-- navy arrows -->
<g fill="#1a1a60" stroke="#1a1a60">
<path d="M19.5,183 L19.5,197.5" stroke-width="1.6"/>
<path d="M17,184.5 L19.5,181 L22,184.5 Z M17,196 L19.5,199.5 L22,196 Z" stroke="none"/>
<path d="M18.5,268.5 L18.5,278.5" stroke-width="1.6"/>
<path d="M16,269 L18.5,266 L21,269 Z M16,278 L18.5,281 L21,278 Z" stroke="none"/>
<path d="M33.5,354 L33.5,365" stroke-width="1.6"/>
<path d="M31,355 L33.5,351.5 L36,355 Z M31,364.5 L33.5,368 L36,364.5 Z" stroke="none"/>
<path d="M29.8,386.5 L29.8,392.5" stroke-width="1.5"/>
<path d="M27.5,387.5 L29.8,384.5 L32,387.5 Z M27.5,391.5 L29.8,394.5 L32,391.5 Z" stroke="none"/>
<path d="M28,416 L31.5,418.5 L28,421 Z" stroke="none"/>
</g>
</svg>
<div class="a" style="left:12px;top:552px;width:33px;height:25px;background:linear-gradient(#fdfdfb,#ecebe4);border:1px solid #fff;border-right:2px solid #9d9a8d;border-bottom:2px solid #9d9a8d"></div>
<div class="a t" style="left:18px;top:558px;font-size:10.5px;line-height:13px">Next</div>

<div class="a" style="left:52px;top:590px;width:79px;height:24px;background:#ece9d8;border-top:1px solid #aca899;border-left:1px solid #aca899;border-bottom:1px solid #fff;border-right:1px solid #fff;box-shadow:inset 1px 1px 0 #716f64, inset -1px -1px 0 #f1efe2"></div><div class="a" style="left:54px;top:592px;width:60px;height:20px;background:#3a6cc8;outline:1px dotted #000;outline-offset:-1px"></div><div class="a" style="left:114px;top:592px;width:17px;height:20px;background:#ece9d8;border-top:1px solid #fff;border-left:1px solid #fff;border-bottom:1px solid #716f64;border-right:1px solid #716f64;box-shadow:inset -1px -1px 0 #aca899"></div><div class="a" style="left:119px;top:600px;width:0;height:0;border-left:3.5px solid transparent;border-right:3.5px solid transparent;border-top:4px solid #000"></div><div class="a t" style="left:56px;top:595px;font-size:14px;line-height:16px;color:#fff;">40 nS</div><div class="a" style="left:132px;top:590px;width:81px;height:24px;background:#000;border-top:1px solid #aca899;border-left:1px solid #aca899;border-bottom:1px solid #fff;border-right:1px solid #fff;box-shadow:inset 1px 1px 0 #716f64, inset -1px -1px 0 #f1efe2"></div><div class="a t" style="left:136px;top:595px;font-size:14px;line-height:16px;color:#909090;">150MS/s</div><div class="a" style="left:213px;top:590px;width:79px;height:24px;background:#000;border-top:1px solid #aca899;border-left:1px solid #aca899;border-bottom:1px solid #fff;border-right:1px solid #fff;box-shadow:inset 1px 1px 0 #716f64, inset -1px -1px 0 #f1efe2"></div><div class="a" style="left:275px;top:592px;width:17px;height:20px;background:#ece9d8;border-top:1px solid #fff;border-left:1px solid #fff;border-bottom:1px solid #716f64;border-right:1px solid #716f64;box-shadow:inset -1px -1px 0 #aca899"></div><div class="a" style="left:280px;top:600px;width:0;height:0;border-left:3.5px solid transparent;border-right:3.5px solid transparent;border-top:4px solid #000"></div><div class="a t" style="left:217px;top:595px;font-size:14px;line-height:16px;color:#f0f0f0;">Min</div><div class="a" style="left:294px;top:591px;width:48px;height:21px;background:#ece9d8;border-top:1px solid #fff;border-left:1px solid #fff;border-bottom:1px solid #716f64;border-right:1px solid #716f64;box-shadow:inset -1px -1px 0 #aca899"></div><div class="a" style="left:342px;top:590px;width:97px;height:24px;background:#000;border-top:1px solid #aca899;border-left:1px solid #aca899;border-bottom:1px solid #fff;border-right:1px solid #fff;box-shadow:inset 1px 1px 0 #716f64, inset -1px -1px 0 #f1efe2"></div><div class="a t" style="left:377px;top:595px;font-size:14px;line-height:16px;color:#a0a0a0;">50%</div><div class="a" style="left:440px;top:591px;width:47px;height:21px;background:#ece9d8;border-top:1px solid #fff;border-left:1px solid #fff;border-bottom:1px solid #716f64;border-right:1px solid #716f64;box-shadow:inset -1px -1px 0 #aca899"></div><div class="a" style="left:609px;top:590px;width:93px;height:24px;background:#000;border-top:1px solid #aca899;border-left:1px solid #aca899;border-bottom:1px solid #fff;border-right:1px solid #fff;box-shadow:inset 1px 1px 0 #716f64, inset -1px -1px 0 #f1efe2"></div><div class="a t" style="left:612px;top:594px;font-size:14px;line-height:16px;color:#b8b8b8;">Hold</div>
<svg class="a" style="left:0;top:580px" width="735" height="58" viewBox="0 580 735 58">
<path d="M319,593.8 L312.6,600.3 L319,606.8" fill="none" stroke="#0c0c80" stroke-width="1.8"/>
<path d="M323.5,593.5 L315.5,600.3 L323.5,607 Z" fill="#0c0c80" stroke="#fff" stroke-width="0.9"/>
<path d="M462.5,593.8 L468.9,600.3 L462.5,606.8" fill="none" stroke="#0c0c80" stroke-width="1.8"/>
<path d="M458.8,593.5 L466.5,600.3 L458.8,607 Z" fill="#0c0c80" stroke="#fff" stroke-width="0.9"/>
<!-- slider -->
<rect x="496" y="596" width="104" height="3.5" fill="#000"/>
<path d="M494,605.5 L597,605.5" stroke="#8a887c" stroke-width="2"/>
<path d="M494,603.5 L597,603.5" stroke="#fff" stroke-width="1"/>
<rect x="597" y="599.5" width="5" height="10" fill="#ece9d8" stroke="#8a887c" stroke-width="1"/>
<!-- blue icon -->
<defs><radialGradient id="bic" cx="0.45" cy="0.4" r="0.6"><stop offset="0" stop-color="#eef4fc"/><stop offset="0.7" stop-color="#c4d6ec"/><stop offset="1" stop-color="#7c98c0"/></radialGradient></defs>
<rect x="711" y="591.5" width="19" height="19.5" fill="#aabad0"/>
<path d="M710.5,611.5 L730,611.5" stroke="#6a6a60" stroke-width="1"/>
<circle cx="720.8" cy="601" r="7.8" fill="url(#bic)"/>
<path d="M717.5,596 L721.8,600.3" stroke="#1a2a6a" stroke-width="1.3"/>
<path d="M723.3,598 L723.3,601.8 L719.5,601.8 Z" fill="#1a2a6a"/>
<path d="M718.5,603.7 L726,603.7" stroke="#1a2a6a" stroke-width="1.2"/>
<!-- status panes -->
<g fill="none" stroke="#aca899" shape-rendering="crispEdges">
<path d="M56.5,632 L56.5,616.5 L105.5,616.5"/>
<path d="M115.5,632 L115.5,616.5 L122.5,616.5 M125.5,632 L125.5,616.5 L132.5,616.5 M135.5,632 L135.5,616.5 L142.5,616.5 M145.5,632 L145.5,616.5 L152.5,616.5"/>
<path d="M593.5,633 L593.5,616.5 L660.5,616.5 M661.5,633 L661.5,616.5 L711.5,616.5"/>
</g>
<g fill="none" stroke="#fff" shape-rendering="crispEdges">
<path d="M57,632.5 L105.5,632.5 L105.5,617"/>
<path d="M116,632.5 L122.5,632.5 L122.5,617 M126,632.5 L132.5,632.5 L132.5,617 M136,632.5 L142.5,632.5 L142.5,617 M146,632.5 L152.5,632.5 L152.5,617"/>
</g>
<path d="M660.5,617 L660.5,633 M711.5,617 L711.5,634" stroke="#aca899" shape-rendering="crispEdges"/>
<path d="M4,616.5 L52,616.5" stroke="#fff" stroke-width="1"/>
<path d="M4.5,28 L4.5,634" stroke="#fbfbf6" stroke-width="1"/>
<g stroke="#aca899" stroke-width="1.2">
<path d="M718,633 L729,622 M722,633 L729,626 M726,633 L729,630"/>
</g>
<g stroke="#fff" stroke-width="1">
<path d="M719,633.5 L730,622.5 M723,633.5 L730,626.5"/>
</g>
</svg>
<div class="a t" style="left:595px;top:617.5px;font-size:12.5px;line-height:14.5px;color:#000;">12.10.2010</div><div class="a t" style="left:672px;top:617.5px;font-size:12.5px;line-height:14.5px;color:#000;">22:18</div>

<svg class="a" style="left:0;top:0" width="735" height="28" viewBox="0 0 735 28">
<path d="M10,8 L12.5,8.5 L18.5,8.5 L19,16.5 L15,17 L11.5,17 L10.5,13 Z" fill="#dfe4ee"/>
<path d="M14,11 L18,14 L18,16 Z" fill="#7a9ad0"/>
<path d="M9.5,6.5 L9.5,12 M12.5,8.5 L18,8.5 M15.5,16.5 L20,16.5 M8,10.5 L7,13 L8,15" stroke="#000" stroke-width="1.2" fill="none"/>
<circle cx="12" cy="14.5" r="1" fill="#000"/><circle cx="14.5" cy="15.5" r="0.8" fill="#000"/>
<rect x="8" y="17.5" width="7" height="3.5" fill="#000"/>
<path d="M8.5,19.5 L13,19.5" stroke="#f0e8d0" stroke-width="1"/>
<!-- buttons -->
<defs>
<linearGradient id="bb" x1="0" y1="0" x2="1" y2="1"><stop offset="0" stop-color="#5a96ff"/><stop offset="0.5" stop-color="#2a6cf0"/><stop offset="1" stop-color="#1a58e0"/></linearGradient>
<linearGradient id="rb" x1="0" y1="0" x2="1" y2="1"><stop offset="0" stop-color="#f08a70"/><stop offset="0.5" stop-color="#e05a34"/><stop offset="1" stop-color="#c84018"/></linearGradient>
</defs>
<rect x="662.5" y="4.5" width="20" height="20" rx="2.5" fill="url(#bb)" stroke="#fff"/>
<rect x="667" y="16" width="7" height="3" fill="#fff"/>
<rect x="685.5" y="4.5" width="20" height="20" rx="2.5" fill="url(#bb)" stroke="#fff"/>
<path d="M690.5,9.5 L700.5,9.5 L700.5,19.5 L690.5,19.5 Z" fill="none" stroke="#fff" stroke-width="1"/>
<rect x="690" y="9" width="11" height="3" fill="#fff"/>
<rect x="708.5" y="4.5" width="20" height="20" rx="2.5" fill="url(#rb)" stroke="#fff"/>
<path d="M713.5,9.5 L723.5,19.5 M723.5,9.5 L713.5,19.5" stroke="#fff" stroke-width="2"/>
</svg>

</body></html>
